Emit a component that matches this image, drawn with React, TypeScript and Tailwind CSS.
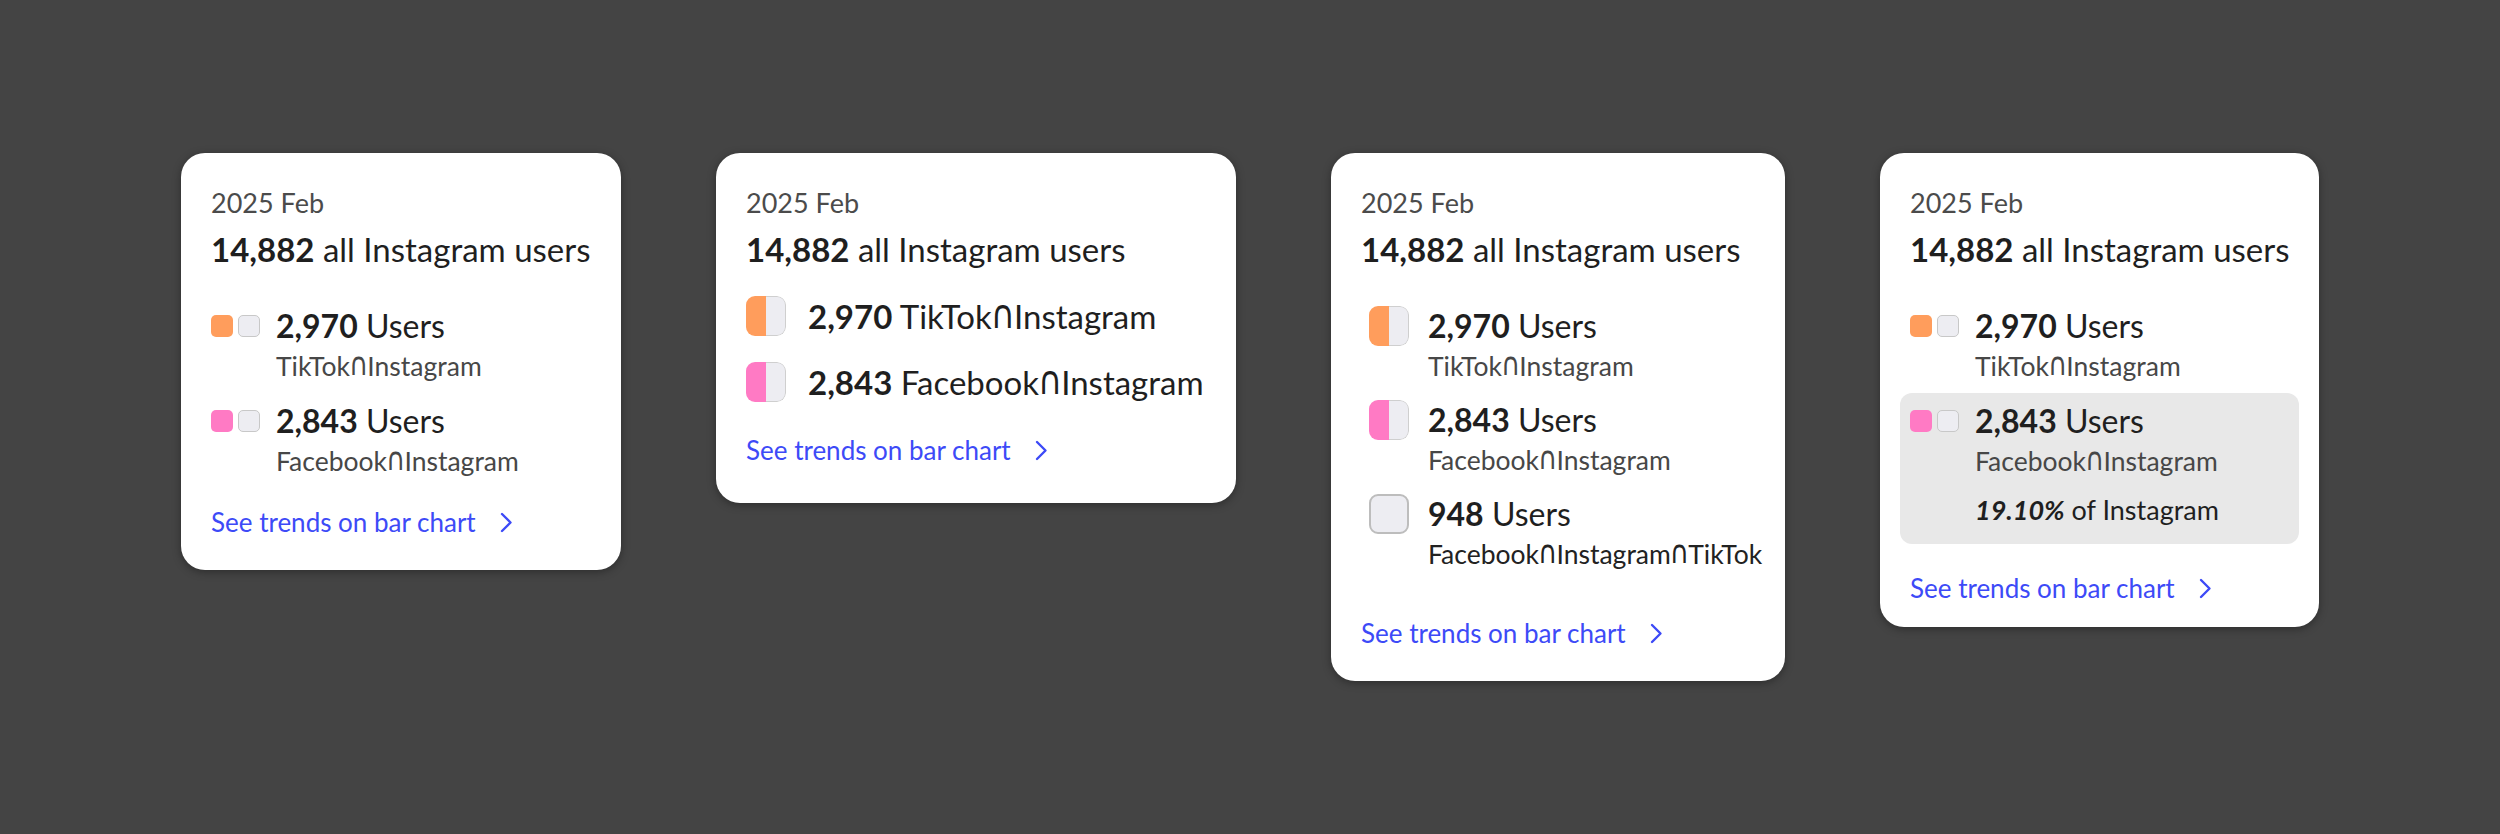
import React from "react";

const BLUE = "#3d4af7";

function Chevron() {
  return (
    <svg width="13" height="21" viewBox="0 0 13 21" fill="none" className="shrink-0">
      <path d="M2 2 L10.5 10.5 L2 19" stroke={BLUE} strokeWidth="2.4" strokeLinecap="round" strokeLinejoin="round" />
    </svg>
  );
}

function Cap() {
  return (
    <span className="-mx-[1px] inline-block origin-bottom scale-y-[1.2] font-['DejaVu_Sans',sans-serif] leading-none">
      ∩
    </span>
  );
}

function Label({ text }: { text: string }) {
  const parts = text.split("∩");
  return (
    <>
      {parts.map((p, i) => (
        <React.Fragment key={i}>
          {i > 0 && <Cap />}
          {p}
        </React.Fragment>
      ))}
    </>
  );
}

function Link({ className = "" }: { className?: string }) {
  return (
    <div className={"flex items-center gap-[24px] text-[26px] leading-[36px] text-[#3d4af7] " + className}>
      <span>See trends on bar chart</span>
      <Chevron />
    </div>
  );
}

function Header() {
  return (
    <>
      <div className="text-[27px] leading-[36px] text-[#4b4b4b]">2025 Feb</div>
      <div className="mt-[8px] whitespace-nowrap text-[33px] leading-[40px] text-[#1f1f1f]">
        <span className="font-bold">14,882</span> all Instagram users
      </div>
    </>
  );
}

function SmallSquares({ color }: { color: string }) {
  return (
    <div className="flex h-[40px] shrink-0 items-center gap-[5px]">
      <div className={"h-[22px] w-[22px] rounded-[5px] " + color} />
      <div className="h-[22px] w-[22px] rounded-[5px] border-[1.5px] border-[#c8c8c8] bg-[#ededf2]" />
    </div>
  );
}

function HalfSquare({ color }: { color: string }) {
  return (
    <div className="flex h-[40px] w-[40px] shrink-0 overflow-hidden rounded-[9px]">
      <div className={"h-full w-[20px] " + color} />
      <div className="h-full w-[20px] rounded-r-[9px] border-[1.5px] border-l-0 border-[#cfcfcf] bg-[#ededf2]" />
    </div>
  );
}

function EmptySquare() {
  return <div className="h-[40px] w-[40px] shrink-0 rounded-[9px] border-2 border-[#bdbdbd] bg-[#ededf2]" />;
}

function UserRow({
  marker,
  count,
  label,
  gap,
  labelDark = false,
}: {
  marker: React.ReactNode;
  count: string;
  label: string;
  gap: string;
  labelDark?: boolean;
}) {
  return (
    <div className={"flex items-start " + gap}>
      {marker}
      <div className="whitespace-nowrap">
        <div className="h-[40px] text-[32px] leading-[40px] text-[#1f1f1f]">
          <span className="font-bold">{count}</span> Users
        </div>
        <div
          className={
            "mt-[4px] h-[32px] text-[26.5px] leading-[32px] " + (labelDark ? "text-[#222]" : "text-[#474747]")
          }
        >
          <Label text={label} />
        </div>
      </div>
    </div>
  );
}

const cardBase = "shrink-0 rounded-[24px] bg-white px-[30px] shadow-[0_2px_8px_rgba(0,0,0,0.35)]";

export default function App() {
  return (
    <div className="flex min-h-[834px] w-full items-start justify-center gap-[95px] bg-[#444444] pt-[153px] font-['Lato',sans-serif]">
      {/* Card 1 */}
      <div className={cardBase + " w-[440px] pt-[32px] pb-[30px]"}>
        <Header />
        <div className="mt-[37px] flex flex-col gap-[19px]">
          <UserRow marker={<SmallSquares color="bg-[#ff9d5c]" />} count="2,970" label="TikTok∩Instagram" gap="gap-[16px]" />
          <UserRow marker={<SmallSquares color="bg-[#ff7ac4]" />} count="2,843" label="Facebook∩Instagram" gap="gap-[16px]" />
        </div>
        <Link className="mt-[27px]" />
      </div>

      {/* Card 2 */}
      <div className={cardBase + " w-[520px] pt-[32px] pb-[35px]"}>
        <Header />
        <div className="mt-[27px] flex flex-col gap-[26px]">
          <div className="flex items-center gap-[22px]">
            <HalfSquare color="bg-[#ff9d5c]" />
            <div className="h-[40px] whitespace-nowrap text-[33px] leading-[40px] text-[#1f1f1f]">
              <span className="font-bold">2,970</span> <Label text="TikTok∩Instagram" />
            </div>
          </div>
          <div className="flex items-center gap-[22px]">
            <HalfSquare color="bg-[#ff7ac4]" />
            <div className="h-[40px] whitespace-nowrap text-[33px] leading-[40px] text-[#1f1f1f]">
              <span className="font-bold">2,843</span> <Label text="Facebook∩Instagram" />
            </div>
          </div>
        </div>
        <Link className="mt-[30px]" />
      </div>

      {/* Card 3 */}
      <div className={cardBase + " w-[454px] pt-[32px] pb-[30px]"}>
        <Header />
        <div className="mt-[37px] flex flex-col gap-[18px] pl-[8px]">
          <UserRow marker={<HalfSquare color="bg-[#ff9d5c]" />} count="2,970" label="TikTok∩Instagram" gap="gap-[19px]" />
          <UserRow marker={<HalfSquare color="bg-[#ff7ac4]" />} count="2,843" label="Facebook∩Instagram" gap="gap-[19px]" />
          <UserRow marker={<EmptySquare />} count="948" label="Facebook∩Instagram∩TikTok" gap="gap-[19px]" labelDark />
        </div>
        <Link className="mt-[45px]" />
      </div>

      {/* Card 4 */}
      <div className={cardBase + " w-[439px] pt-[32px] pb-[21px]"}>
        <Header />
        <div className="mt-[37px]">
          <UserRow marker={<SmallSquares color="bg-[#ff9d5c]" />} count="2,970" label="TikTok∩Instagram" gap="gap-[16px]" />
        </div>
        <div className="-mx-[10px] mt-[11px] rounded-[12px] bg-[#e8e8e8] px-[10px] pt-[8px] pb-[16px]">
          <UserRow marker={<SmallSquares color="bg-[#ff7ac4]" />} count="2,843" label="Facebook∩Instagram" gap="gap-[16px]" />
          <div className="mt-[15px] pl-[65px] whitespace-nowrap text-[27px] leading-[36px] text-[#1f1f1f]">
            <span className="font-bold italic">19.10%</span> of Instagram
          </div>
        </div>
        <Link className="mt-[26px]" />
      </div>
    </div>
  );
}
